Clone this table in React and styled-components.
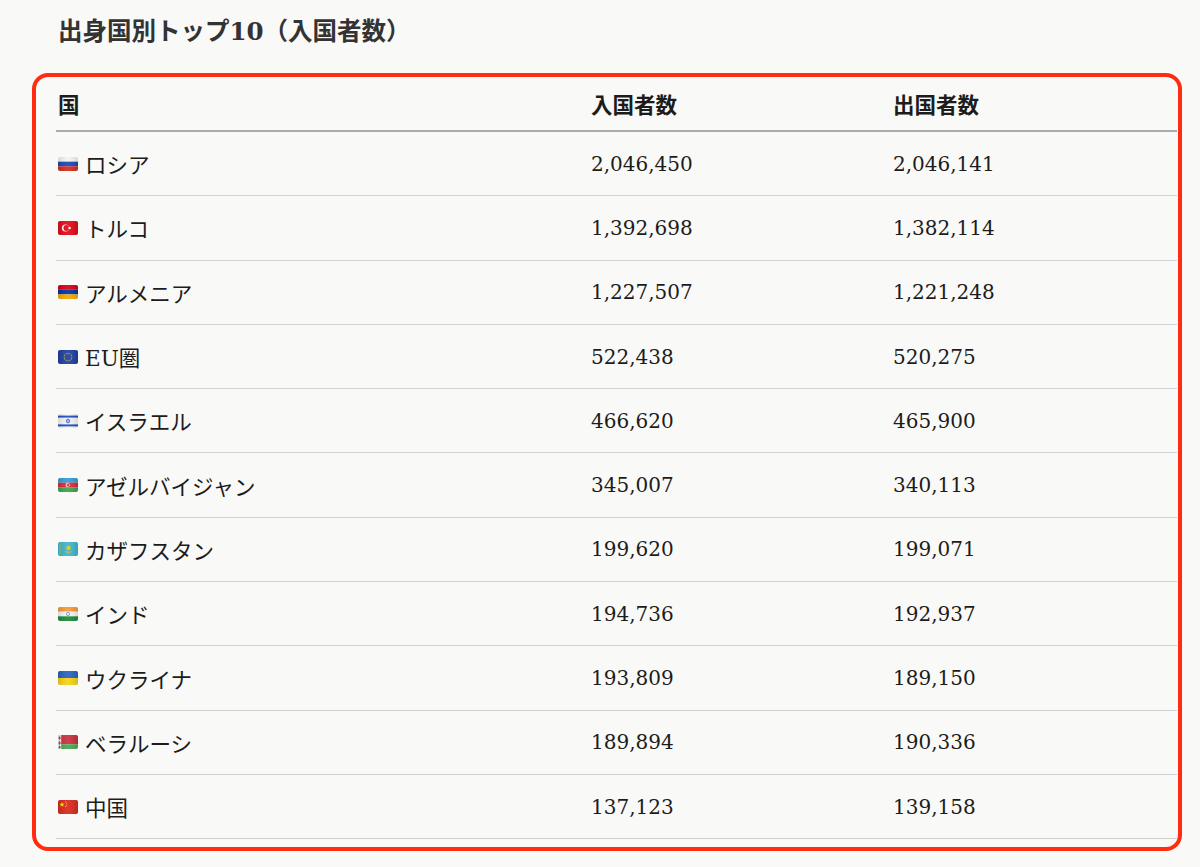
import styled, { createGlobalStyle } from "styled-components"

const GlobalStyle = createGlobalStyle`
    body {
        margin: 0;
        background: #f9f9f7;
        font-family: "DejaVu Serif", "Noto Sans CJK JP", serif;
        color: #1c1c1c;
    }
`

const Page = styled.div`
    padding: 14px 18px 0 32px;
`

const Title = styled.h2`
    margin: 0 0 23px 26px;
    font-size: 24.5px;
    font-weight: bold;
    color: #333;
    line-height: 36px;
`

const Frame = styled.div`
    border: 4px solid #ff2c12;
    border-radius: 16px;
    padding: 0 1px 8px 20px;
`

const Row = styled.div`
    display: grid;
    grid-template-columns: 533px 302px 1fr;
    align-items: center;
    height: ${p => p.$head ? "55px" : "64.3px"};
    box-sizing: border-box;
    border-bottom: ${p => p.$head ? "2px solid #ababab" : "1px solid #d2d2d2"};
    font-weight: ${p => p.$head ? "bold" : "normal"};
`

const Cell = styled.div`
    display: flex;
    align-items: center;
    gap: 7px;
    padding-left: 2px;
    font-size: ${p => p.$num ? "20px" : "21.5px"};
`

const FlagSvg = styled.svg`
    width: 20px;
    height: 14px;
    flex: none;
    border-radius: 2px;
`

const stripes = (colors) => colors.map((c, i) => (
    <rect key={i} x="0" y={(14 / colors.length) * i} width="20" height={14 / colors.length + 0.05} fill={c} />
))

const Flag = ({code}) => {
    let body
    switch (code) {
        case "ru":
            body = stripes(["#f4f4f4", "#1c46b8", "#d52b1e"])
            break
        case "tr":
            body = <>
                <rect width="20" height="14" fill="#e30a17" />
                <circle cx="7.5" cy="7" r="3.6" fill="#fff" />
                <circle cx="8.4" cy="7" r="2.9" fill="#e30a17" />
                <circle cx="11.6" cy="7" r="1.2" fill="#fff" />
            </>
            break
        case "am":
            body = stripes(["#d90012", "#0033a0", "#f2a800"])
            break
        case "eu":
            body = <>
                <rect width="20" height="14" fill="#1f3fa0" />
                {Array.from({length: 12}).map((_, i) => {
                    const a = (i / 12) * Math.PI * 2
                    return <circle key={i} cx={10 + Math.cos(a) * 3.8} cy={7 + Math.sin(a) * 3.8} r="0.55" fill="#ffcc00" />
                })}
            </>
            break
        case "il":
            body = <>
                <rect width="20" height="14" fill="#f6f6f6" />
                <rect y="1.6" width="20" height="2" fill="#1f4fbf" />
                <rect y="10.4" width="20" height="2" fill="#1f4fbf" />
                <polygon points="10,4.6 12,8.1 8,8.1" fill="none" stroke="#1f4fbf" strokeWidth="0.6" />
                <polygon points="10,9.4 12,5.9 8,5.9" fill="none" stroke="#1f4fbf" strokeWidth="0.6" />
            </>
            break
        case "az":
            body = <>
                {stripes(["#2f9fd6", "#e0293a", "#3aa54a"])}
                <circle cx="9.6" cy="7" r="2" fill="#fff" />
                <circle cx="10.2" cy="7" r="1.6" fill="#e0293a" />
                <circle cx="11.6" cy="7" r="0.6" fill="#fff" />
            </>
            break
        case "kz":
            body = <>
                <rect width="20" height="14" fill="#3fb5cf" />
                <circle cx="10.5" cy="6" r="2.2" fill="#f2c300" />
                <path d="M7.5 9.6 Q10.5 11.4 13.5 9.6" stroke="#f2c300" strokeWidth="0.8" fill="none" />
                <rect x="1.5" y="1.5" width="0.8" height="11" fill="#e8c300" />
            </>
            break
        case "in":
            body = <>
                {stripes(["#f59a38", "#f6f6f6", "#1f8a3a"])}
                <circle cx="10" cy="7" r="1.6" fill="none" stroke="#1c3c98" strokeWidth="0.5" />
            </>
            break
        case "ua":
            body = stripes(["#2a63c0", "#f7d216"])
            break
        case "by":
            body = <>
                <rect width="20" height="9.3" fill="#c8313e" />
                <rect y="9.3" width="20" height="4.7" fill="#4aa657" />
                <rect width="3.2" height="14" fill="#f6f6f6" />
                <path d="M1.6 1 L2.8 3 L1.6 5 L0.4 3 Z M1.6 6 L2.8 8 L1.6 10 L0.4 8 Z M1.6 10.5 L2.8 12.3 L1.6 13.8 L0.4 12.3 Z" fill="#c8313e" />
            </>
            break
        case "cn":
            body = <>
                <rect width="20" height="14" fill="#d92a1c" />
                <polygon points="4,1.8 4.7,3.7 6.6,3.7 5.1,4.9 5.6,6.8 4,5.7 2.4,6.8 2.9,4.9 1.4,3.7 3.3,3.7" fill="#ffde00" />
                <circle cx="7.6" cy="1.8" r="0.5" fill="#ffde00" />
                <circle cx="8.6" cy="3.3" r="0.5" fill="#ffde00" />
                <circle cx="8.6" cy="5.2" r="0.5" fill="#ffde00" />
                <circle cx="7.6" cy="6.6" r="0.5" fill="#ffde00" />
            </>
            break
        default:
            body = null
    }
    return (
        <FlagSvg viewBox="0 0 20 14">
            {body}
            <rect width="20" height="14" fill="url(#shade)" />
        </FlagSvg>
    )
}

const countries = [
    { code: "ru", name: "ロシア", arrivals: "2,046,450", departures: "2,046,141" },
    { code: "tr", name: "トルコ", arrivals: "1,392,698", departures: "1,382,114" },
    { code: "am", name: "アルメニア", arrivals: "1,227,507", departures: "1,221,248" },
    { code: "eu", name: "EU圏", arrivals: "522,438", departures: "520,275" },
    { code: "il", name: "イスラエル", arrivals: "466,620", departures: "465,900" },
    { code: "az", name: "アゼルバイジャン", arrivals: "345,007", departures: "340,113" },
    { code: "kz", name: "カザフスタン", arrivals: "199,620", departures: "199,071" },
    { code: "in", name: "インド", arrivals: "194,736", departures: "192,937" },
    { code: "ua", name: "ウクライナ", arrivals: "193,809", departures: "189,150" },
    { code: "by", name: "ベラルーシ", arrivals: "189,894", departures: "190,336" },
    { code: "cn", name: "中国", arrivals: "137,123", departures: "139,158" },
]

const App = () => {
    return (
        <>
            <GlobalStyle />
            <svg width="0" height="0" style={{position: "absolute"}}>
                <defs>
                    <linearGradient id="shade" x1="0" y1="0" x2="1" y2="0">
                        <stop offset="0" stopColor="#000" stopOpacity="0.12" />
                        <stop offset="0.5" stopColor="#fff" stopOpacity="0.08" />
                        <stop offset="1" stopColor="#000" stopOpacity="0.12" />
                    </linearGradient>
                </defs>
            </svg>
            <Page>
                <Title>出身国別トップ10（入国者数）</Title>
                <Frame>
                    <Row $head>
                        <Cell>国</Cell>
                        <Cell>入国者数</Cell>
                        <Cell>出国者数</Cell>
                    </Row>
                    {countries.map(c => (
                        <Row key={c.code}>
                            <Cell><Flag code={c.code} />{c.name}</Cell>
                            <Cell $num>{c.arrivals}</Cell>
                            <Cell $num>{c.departures}</Cell>
                        </Row>
                    ))}
                </Frame>
            </Page>
        </>
    )
}

export default App
